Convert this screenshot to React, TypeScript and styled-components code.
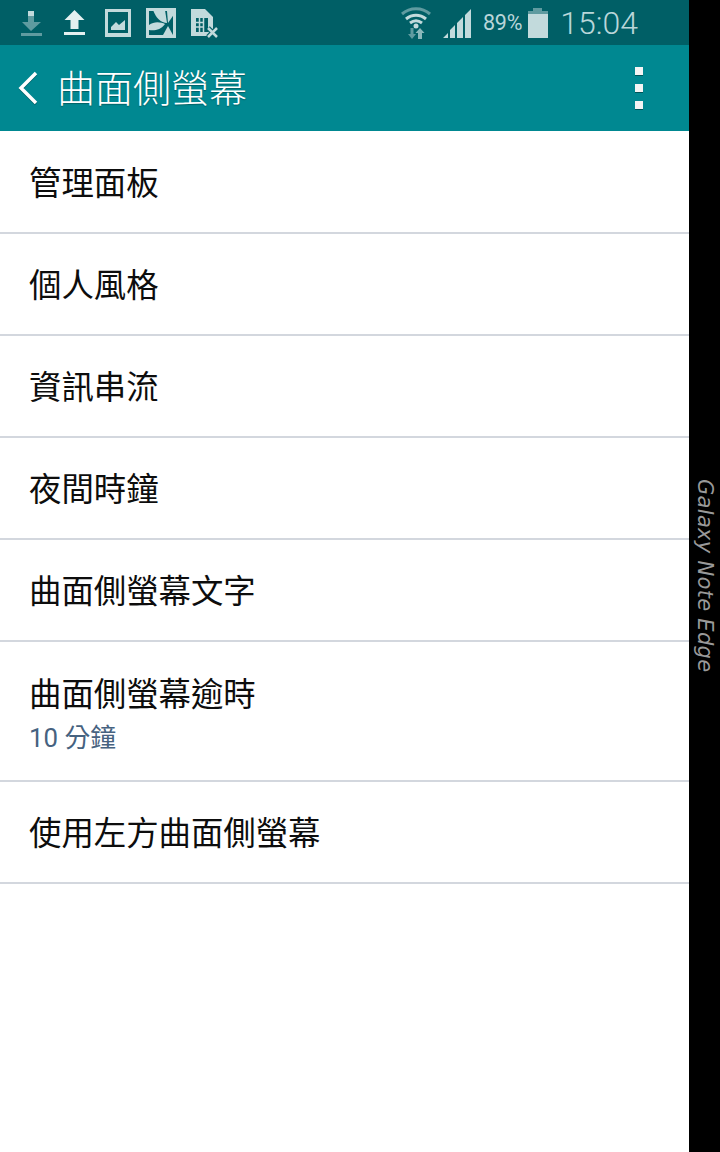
import React from 'react'
import styled, { createGlobalStyle } from 'styled-components'

const GlobalStyle = createGlobalStyle`
  html, body {
    margin: 0;
    padding: 0;
    background: #fff;
  }
  * {
    box-sizing: border-box;
  }
`

const CJK = `Roboto, "Noto Sans CJK TC", sans-serif`

const Page = styled.div`
  display: flex;
  width: 720px;
  height: 1152px;
  overflow: hidden;
  font-family: ${CJK};
`

const Screen = styled.div`
  display: flex;
  flex-direction: column;
  width: 689px;
  background: #fff;
`

const EdgePanel = styled.aside`
  display: flex;
  justify-content: center;
  width: 31px;
  padding: 479px 1px 0 0;
  background: #000;
`

const EdgeLabel = styled.span`
  writing-mode: vertical-rl;
  font-family: 'DejaVu Sans', sans-serif;
  font-style: italic;
  font-weight: 200;
  font-size: 21px;
  letter-spacing: 0.3px;
  line-height: 1;
  height: 195px;
  white-space: nowrap;
  color: #999;
`

const StatusBar = styled.div`
  display: flex;
  align-items: center;
  justify-content: space-between;
  height: 45px;
  padding: 0 51px 0 20px;
  background: #005f66;
  color: #b9d6d9;
`

const IconGroup = styled.div<{ $gap: number }>`
  display: flex;
  align-items: center;
  gap: ${(p) => p.$gap}px;
`

const Percent = styled.span`
  font-family: Roboto, sans-serif;
  font-size: 21.5px;
  margin: 0 5px 0 11px;
  letter-spacing: -0.2px;
`

const Clock = styled.span`
  font-family: Roboto, sans-serif;
  font-weight: 300;
  font-size: 32px;
  margin-left: 12px;
`

const AppBar = styled.header`
  display: flex;
  align-items: center;
  height: 86px;
  padding: 0 46px 0 17px;
  background: #008891;
  color: #fff;
`

const BackButton = styled.svg`
  width: 22px;
  height: 34px;
  margin-right: 18px;
  filter: drop-shadow(0 1px 0 rgba(0, 60, 60, 0.5));
`

const Title = styled.h1`
  flex: 1;
  margin: 0;
  padding-top: 2px;
  font-size: 38px;
  font-weight: 300;
  line-height: 1;
  letter-spacing: 0;
  text-shadow: 0 1px 1px rgba(0, 60, 60, 0.5);
`

const Overflow = styled.div`
  display: flex;
  flex-direction: column;
  gap: 9px;
`

const Dot = styled.span`
  display: block;
  width: 8px;
  height: 8px;
  background: #f4f4f4;
  box-shadow: 0 1px 0 rgba(0, 50, 50, 0.6);
`

const List = styled.ul`
  list-style: none;
  margin: 0;
  padding: 0;
`

const Row = styled.li<{ $tall?: boolean }>`
  display: flex;
  flex-direction: column;
  justify-content: ${(p) => (p.$tall ? 'flex-start' : 'center')};
  height: ${(p) => (p.$tall ? 140 : 102)}px;
  padding: ${(p) => (p.$tall ? '32px' : '4px')} 0 0 29px;
  border-bottom: 2px solid #d3d7de;
  &:first-child {
    height: 103px;
  }
`

const RowTitle = styled.div`
  font-size: 32.4px;
  line-height: 42px;
  color: #0d0d0d;
`

const RowValue = styled.div`
  margin-top: 6px;
  font-size: 25.8px;
  line-height: 32px;
  color: #466280;
`

const DownloadIcon = () => (
  <svg width='29' height='28' viewBox='0 0 29 28'>
    <rect x='8' y='2' width='6' height='5' fill='#c2dadc' />
    <path d='M8 7h6v6h7l-10 9L2 13h6z' fill='#5f9ba0' />
    <rect x='1' y='24' width='21' height='3' fill='#5f9ba0' />
  </svg>
)

const UploadIcon = () => (
  <svg width='26' height='26' viewBox='0 0 26 26'>
    <path d='M10.500 0l10 10h-6v9h-8v-9h-6z' fill='#e4f0f0' />
    <rect x='0' y='22' width='21' height='3' fill='#e4f0f0' />
  </svg>
)

const PictureIcon = () => (
  <svg width='26' height='28' viewBox='0 0 26 28'>
    <path d='M0 0h26v28H0z M3 3v21h20V3z' fill='#c2dadc' fillRule='evenodd' />
    <path d='M6 21v-3l5-5 3 3 6-5v10z' fill='#c2dadc' />
  </svg>
)

const FlowerIcon = () => (
  <svg width='30' height='30' viewBox='0 0 30 30'>
    <rect x='0' y='0' width='30' height='30' fill='#c2dadc' />
    <rect x='3' y='3' width='24' height='24' fill='#005f66' />
    <path d='M7 2h12l2 13c-6 0-11-5-14-13z' fill='#c2dadc' />
    <path d='M29 1v4l-7 10-1-12z' fill='#c2dadc' />
    <path d='M3 17c5-4 12-3 16-1-4 6-11 7-16 6z' fill='#c2dadc' />
    <path d='M22 18l5 9H17z' fill='#c2dadc' />
  </svg>
)

const SimIcon = () => (
  <svg width='28' height='30' viewBox='0 0 28 30'>
    <path d='M0 1h14l8 8v18l-1 1H0z' fill='#c2dadc' />
    <path d='M5 10h12v14H5z' fill='#005f66' />
    <path d='M8.500 10v14M12.500 10v14M5 14.500h8M5 19h8' stroke='#c2dadc' strokeWidth='1.500' />
    <path d='M17 20l9 9M26 20l-9 9' stroke='#005f66' strokeWidth='5' />
    <path d='M17 20l9 9M26 20l-9 9' stroke='#c2dadc' strokeWidth='2.500' />
  </svg>
)

const WifiIcon = () => (
  <svg width='42' height='32' viewBox='0 0 42 32'>
    <path d='M1 7c8-7 20-7 28 0' stroke='#5f9ba0' strokeWidth='3' fill='none' />
    <path d='M5 12c6-5 14-5 20 0' stroke='#c2dadc' strokeWidth='3' fill='none' />
    <path d='M9 16c4-3 8-3 12 0' stroke='#c2dadc' strokeWidth='3' fill='none' />
    <circle cx='15' cy='19' r='2.500' fill='#c2dadc' />
    <path d='M9.500 21v6H7l4 5 4-5h-2.500v-6z' fill='#5f9ba0' />
    <path d='M19 21l-4.500 5H17v6h4v-6h2.500z' fill='#8ab8bb' />
  </svg>
)

const SignalIcon = () => (
  <svg width='29' height='30' viewBox='0 0 29 30'>
    <path d='M0 30l5-5v5z M7 30v-8l5-5v13z M14 30V15l6-6v21z M22 30V7l6-6v29z' fill='#c2dadc' />
  </svg>
)

const BatteryIcon = () => (
  <svg width='21' height='30' viewBox='0 0 21 30'>
    <rect x='6' y='0' width='9' height='4' fill='#5f9ba0' />
    <rect x='1' y='3' width='20' height='3' fill='#5f9ba0' />
    <rect x='1' y='6' width='20' height='24' fill='#c2dadc' />
  </svg>
)

const items = [
  { title: '管理面板' },
  { title: '個人風格' },
  { title: '資訊串流' },
  { title: '夜間時鐘' },
  { title: '曲面側螢幕文字' },
  { title: '曲面側螢幕逾時', value: '10 分鐘' },
  { title: '使用左方曲面側螢幕' },
]

export default function App() {
  return (
    <Page>
      <GlobalStyle />
      <Screen>
        <StatusBar>
          <IconGroup $gap={15}>
            <DownloadIcon />
            <UploadIcon />
            <PictureIcon />
            <FlowerIcon />
            <SimIcon />
          </IconGroup>
          <IconGroup $gap={0}>
            <WifiIcon />
            <SignalIcon />
            <Percent>89%</Percent>
            <BatteryIcon />
            <Clock>15:04</Clock>
          </IconGroup>
        </StatusBar>
        <AppBar>
          <BackButton viewBox='0 0 22 34'>
            <path d='M19 2L4 17l15 15' stroke='#fff' strokeWidth='3.500' fill='none' />
          </BackButton>
          <Title>曲面側螢幕</Title>
          <Overflow>
            <Dot />
            <Dot />
            <Dot />
          </Overflow>
        </AppBar>
        <List>
          {items.map((item) => (
            <Row key={item.title} $tall={!!item.value}>
              <RowTitle>{item.title}</RowTitle>
              {item.value && <RowValue>{item.value}</RowValue>}
            </Row>
          ))}
        </List>
      </Screen>
      <EdgePanel>
        <EdgeLabel>Galaxy Note Edge</EdgeLabel>
      </EdgePanel>
    </Page>
  )
}
